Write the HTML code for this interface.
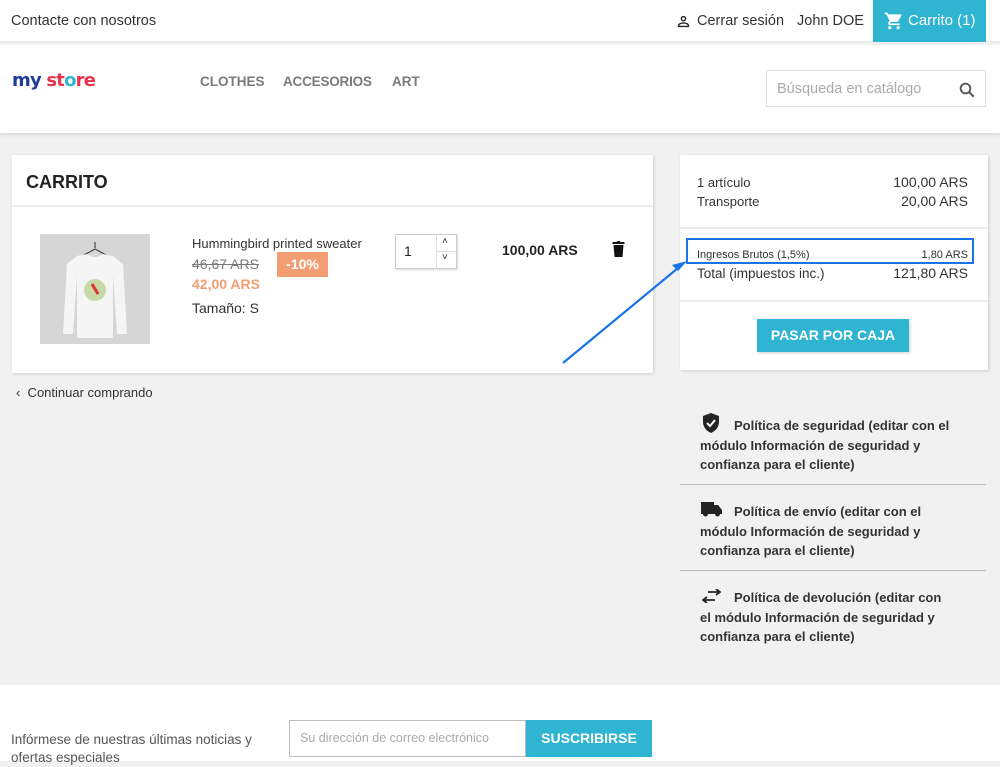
<!DOCTYPE html>
<html><head><meta charset="utf-8"><style>
*{margin:0;padding:0;box-sizing:border-box}
body{width:1000px;height:761px;overflow:hidden;font-family:"Liberation Sans",sans-serif;color:#232323;background:#f1f1f1;position:relative}
.a{position:absolute;white-space:nowrap}
.b{font-weight:bold}
.r{left:700px;font-size:13px;line-height:19.5px;color:#333;font-weight:bold}
</style></head><body>
<div class="a" style="left:0;top:0;width:1000px;height:43px;background:#fff;border-bottom:2px solid #ececec"></div>
<div class="a" style="left:11px;top:13px;font-size:14.5px;color:#333">Contacte con nosotros</div>
<svg class="a" style="left:675px;top:13px" width="17" height="17" viewBox="0 0 24 24"><path d="M12 4a4 4 0 1 0 0 8 4 4 0 0 0 0-8zm0 2a2 2 0 1 1 0 4 2 2 0 0 1 0-4zM12 13c-3 0-8 1.5-8 4.5V20h16v-2.5c0-3-5-4.5-8-4.5zm0 2c2.5 0 5.6 1.2 6 2.5V18H6v-.5c.4-1.3 3.5-2.5 6-2.5z" fill="#232323"/></svg>
<div class="a" style="left:697px;top:13px;font-size:14.5px;color:#333">Cerrar sesión</div>
<div class="a" style="left:797px;top:13px;font-size:14.5px;color:#333">John DOE</div>
<div class="a" style="left:873px;top:0;width:113px;height:42px;background:#2fb5d2"></div>
<svg class="a" style="left:884px;top:11px" width="20" height="20" viewBox="0 0 24 24"><path fill="#fff" d="M7 18c-1.1 0-2 .9-2 2s.9 2 2 2 2-.9 2-2-.9-2-2-2zM1 2v2h2l3.6 7.6-1.4 2.4c-.1.3-.2.6-.2 1 0 1.1.9 2 2 2h12v-2H7.4c-.1 0-.2-.1-.2-.2v-.1l.9-1.7h7.4c.8 0 1.4-.4 1.7-1l3.6-6.5c.1-.2.2-.3.2-.5 0-.6-.4-1-1-1H5.2l-.9-2H1zm16 16c-1.1 0-2 .9-2 2s.9 2 2 2 2-.9 2-2-.9-2-2-2z"/></svg>
<div class="a" style="left:908px;top:12px;font-size:15px;color:#fff">Carrito (1)</div>

<div class="a" style="left:0;top:45px;width:1000px;height:88px;background:#fff;box-shadow:0 2px 3px rgba(0,0,0,.1)"></div>
<div class="a b" style="left:12px;top:70px;font-size:18px;letter-spacing:-0.8px;font-family:'DejaVu Sans',sans-serif"><span style="color:#1f3b9a">my</span> <span style="color:#e8344c">st</span><span style="color:#2fb5d2">o</span><span style="color:#e8344c">re</span></div>
<div class="a b" style="left:200px;top:74px;font-size:13.5px;color:#7a7a7a">CLOTHES</div>
<div class="a b" style="left:283px;top:74px;font-size:13.5px;color:#7a7a7a;letter-spacing:-0.2px">ACCESORIOS</div>
<div class="a b" style="left:392px;top:74px;font-size:13.5px;color:#7a7a7a">ART</div>
<div class="a" style="left:766px;top:70px;width:220px;height:37px;border:1px solid #ddd;background:#fff"></div>
<div class="a" style="left:777px;top:81px;font-size:14.5px;color:#aaa">Búsqueda en catálogo</div>
<svg class="a" style="left:958px;top:81px" width="18" height="18" viewBox="0 0 24 24"><circle cx="10" cy="10" r="6.5" fill="none" stroke="#555" stroke-width="2.4"/><path d="M15 15l6 6" stroke="#555" stroke-width="2.6"/></svg>

<div class="a" style="left:12px;top:155px;width:641px;height:218px;background:#fff;box-shadow:1px 1px 3px rgba(0,0,0,.15)"></div>
<div class="a b" style="left:26px;top:172px;font-size:18px">CARRITO</div>
<div class="a" style="left:12px;top:205px;width:641px;height:2px;background:#ececec"></div>
<div class="a" style="left:40px;top:234px;width:110px;height:110px;background:#d6d6d6"></div>
<svg class="a" style="left:40px;top:234px" width="110" height="110" viewBox="0 0 110 110"><path d="M55 8v6M42 22l13-7 13 7" stroke="#444" fill="none" stroke-width="1.2"/><path d="M37 22l-10 8-4 70h10l4-60 0 64h36l0-64 4 60h10l-4-70-10-8-10-2q-8 6-16 0z" fill="#f5f5f5"/><circle cx="55" cy="56" r="11" fill="#c8d9a8"/><path d="M52 50l6 10" stroke="#d33" stroke-width="3"/></svg>
<div class="a" style="left:192px;top:236px;font-size:13px;color:#333">Hummingbird printed sweater</div>
<div class="a" style="left:192px;top:256px;font-size:14px;color:#7a7a7a;text-decoration:line-through">46,67 ARS</div>
<div class="a b" style="left:277px;top:252px;width:51px;height:25px;background:#f39d72;color:#fff;font-size:14px;text-align:center;line-height:25px">-10%</div>
<div class="a b" style="left:192px;top:276px;font-size:14px;color:#f39d72">42,00 ARS</div>
<div class="a" style="left:192px;top:300px;font-size:14px;color:#333">Tamaño: S</div>
<div class="a" style="left:395px;top:234px;width:62px;height:35px;border:1px solid #ccc;background:#fff;box-shadow:1px 1px 2px rgba(0,0,0,.15)"></div>
<div class="a" style="left:436px;top:234px;width:1px;height:35px;background:#ddd"></div>
<div class="a" style="left:436px;top:251px;width:21px;height:1px;background:#ddd"></div>
<div class="a" style="left:404px;top:243px;font-size:14px">1</div>
<div class="a" style="left:442px;top:236px;font-size:10px">˄</div>
<div class="a" style="left:442px;top:252px;font-size:10px">˅</div>
<div class="a b" style="left:502px;top:242px;font-size:14px">100,00 ARS</div>
<svg class="a" style="left:611px;top:240px" width="15" height="18" viewBox="0 0 14 18"><path d="M1 2h4l1-1h2l1 1h4v2H1zM2 5h10l-1 12H3z" fill="#111"/></svg>
<div class="a" style="left:16px;top:385px;font-size:13px;color:#333">‹&nbsp; Continuar comprando</div>

<div class="a" style="left:680px;top:155px;width:308px;height:215px;background:#fff;box-shadow:1px 1px 3px rgba(0,0,0,.15)"></div>
<div class="a" style="left:697px;top:175px;font-size:13px;color:#333">1 artículo</div>
<div class="a" style="left:697px;top:194px;font-size:13px;color:#333">Transporte</div>
<div class="a" style="right:32px;top:174px;font-size:14px;color:#333">100,00 ARS</div>
<div class="a" style="right:32px;top:193px;font-size:14px;color:#333">20,00 ARS</div>
<div class="a" style="left:680px;top:227px;width:308px;height:2px;background:#ececec"></div>
<div class="a" style="left:697px;top:249px;font-size:11px;color:#333">Ingresos Brutos (1,5%)</div>
<div class="a" style="right:32px;top:249px;font-size:11px;color:#333">1,80 ARS</div>
<div class="a" style="left:686px;top:238px;width:288px;height:26px;border:2px solid #1a73e8"></div>
<div class="a" style="left:697px;top:266px;font-size:13.5px;color:#333">Total (impuestos inc.)</div>
<div class="a" style="right:32px;top:265px;font-size:14px;color:#333">121,80 ARS</div>
<div class="a" style="left:680px;top:300px;width:308px;height:2px;background:#ececec"></div>
<div class="a b" style="left:757px;top:319px;width:152px;height:33px;background:#2fb5d2;color:#fff;font-size:14px;text-align:center;line-height:33px;box-shadow:1px 1px 3px rgba(0,0,0,.2)">PASAR POR CAJA</div>
<svg class="a" style="left:0;top:0" width="1000" height="761"><path d="M563 363L678 268" stroke="#1a73e8" stroke-width="2.2"/><path d="M687 261l-15 4 6 6z" fill="#1a73e8"/></svg>

<svg class="a" style="left:702px;top:413px" width="18" height="20" viewBox="0 0 18 20"><path d="M9 0L1 3v6c0 5 3.5 9 8 11 4.5-2 8-6 8-11V3z" fill="#232323"/><path d="M5 10l3 3 5-6" stroke="#fff" stroke-width="2" fill="none"/></svg>
<div class="a r" style="top:416px"><span style="padding-left:34px">Política de seguridad (editar con el</span><br>módulo Información de seguridad y<br>confianza para el cliente)</div>
<div class="a" style="left:680px;top:484px;width:306px;height:1px;background:#bbb"></div>
<svg class="a" style="left:701px;top:501px" width="21" height="16" viewBox="0 0 21 16"><path d="M0 1h13v3h4l4 5v4h-2a2.5 2.5 0 0 1-5 0H7a2.5 2.5 0 0 1-5 0H0z" fill="#232323"/></svg>
<div class="a r" style="top:502px"><span style="padding-left:34px">Política de envío (editar con el</span><br>módulo Información de seguridad y<br>confianza para el cliente)</div>
<div class="a" style="left:680px;top:570px;width:306px;height:1px;background:#bbb"></div>
<svg class="a" style="left:702px;top:589px" width="19" height="14" viewBox="0 0 19 14"><path d="M6 3h12M14 0l4 3-4 3M13 11H1M5 8l-4 3 4 3" stroke="#232323" stroke-width="1.8" fill="none"/></svg>
<div class="a r" style="top:588px"><span style="padding-left:34px">Política de devolución (editar con</span><br>el módulo Información de seguridad y<br>confianza para el cliente)</div>

<div class="a" style="left:0;top:685px;width:1000px;height:76px;background:#fff"></div>
<div class="a" style="left:11px;top:731px;font-size:13.5px;line-height:18px;color:#555;white-space:normal;width:270px">Infórmese de nuestras últimas noticias y ofertas especiales</div>
<div class="a" style="left:289px;top:720px;width:237px;height:37px;border:1px solid #bbb;background:#fff"></div>
<div class="a" style="left:300px;top:731px;font-size:12.5px;color:#aaa">Su dirección de correo electrónico</div>
<div class="a b" style="left:526px;top:720px;width:126px;height:37px;background:#2fb5d2;color:#fff;font-size:14px;text-align:center;line-height:37px">SUSCRIBIRSE</div>
</body></html>
